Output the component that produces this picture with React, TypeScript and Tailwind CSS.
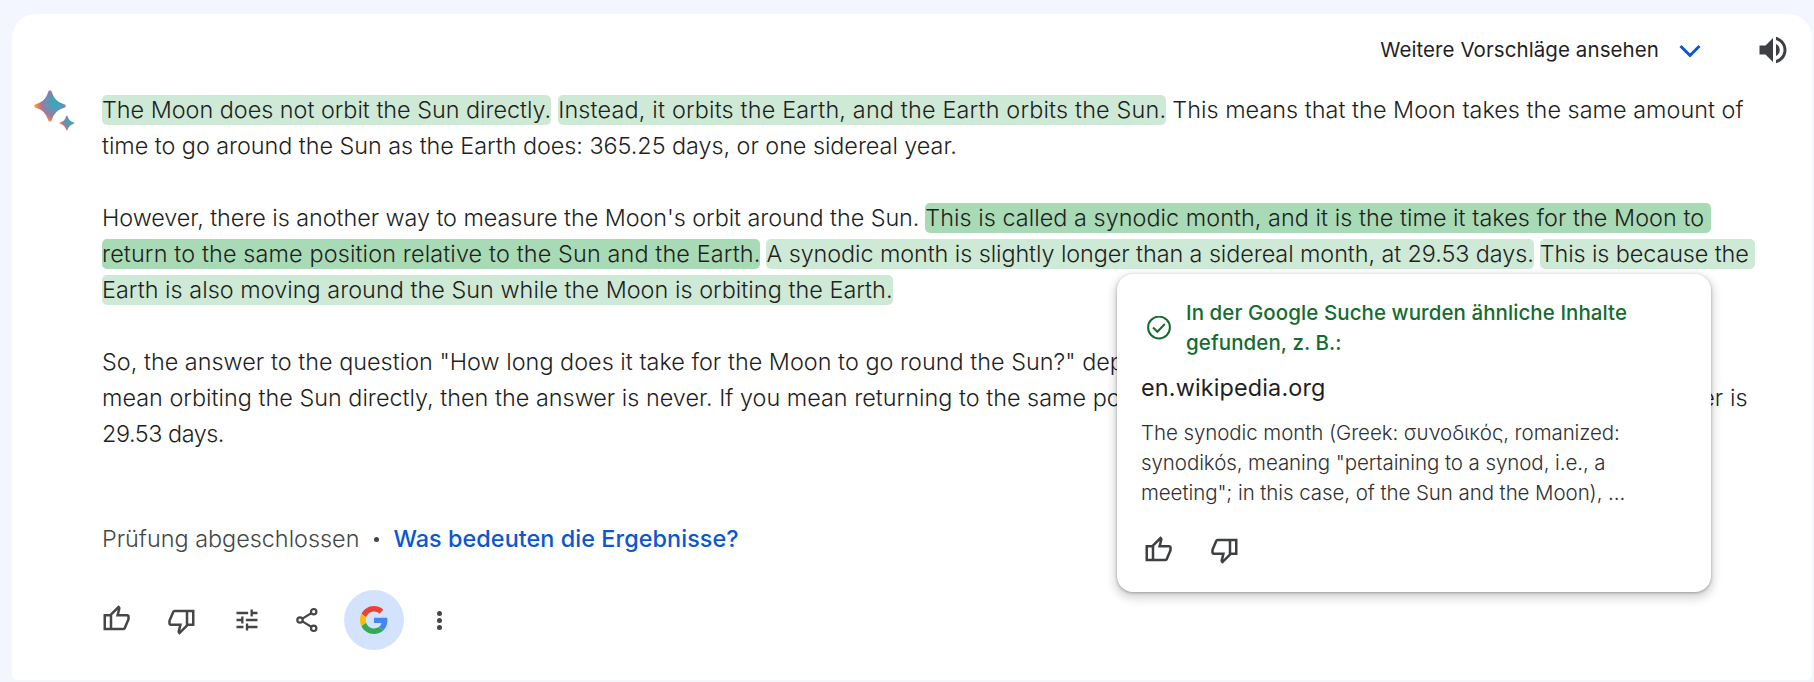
import type { ReactNode } from 'react';
import { MdVolumeUp } from 'react-icons/md';

type Mark = 'light' | 'dark';

const markStyles: Record<Mark, string> = {
  light: 'bg-[#ceead6]',
  dark: 'bg-[#a8dab5]',
};

const Line = ({ children }: { children: ReactNode }) => (
  <div className="flex h-9 items-center whitespace-pre leading-[30px]">{children}</div>
);

const Highlight = ({ mark, className = '', children }: { mark: Mark; className?: string; children: ReactNode }) => (
  <span className={`h-[30px] rounded-[5px] ${markStyles[mark]} ${className}`}>{children}</span>
);

const ThumbUp = ({ className = '' }: { className?: string }) => (
  <svg viewBox="0 -960 960 960" fill="currentColor" className={`size-[30px] ${className}`}>
    <path d="M720-120H280v-520l280-280 50 50q7 7 11.5 19t4.5 23v14l-44 174h258q32 0 56 24t24 56v80q0 7-2 15t-4 15L794-168q-9 20-30 34t-44 14Zm-360-80h360l120-280v-80H480l54-220-174 174v406Zm-80-440v80H160v360h120v80H80v-520h200Z" />
  </svg>
);

const ThumbDown = ({ className = '' }: { className?: string }) => (
  <svg viewBox="0 -960 960 960" fill="currentColor" className={`size-[30px] ${className}`}>
    <path d="M240-840h440v520L400-40l-50-50q-7-7-11.5-19t-4.5-23v-14l44-174H120q-32 0-56-24t-24-56v-80q0-7 2-15t4-15l120-282q9-20 30-34t44-14Zm360 80H240L120-480v80h360l-54 220 174-174v-406Zm80 440v-80h120v-360H680v-80h200v520H680Z" />
  </svg>
);

const Tune = () => (
  <svg viewBox="0 -960 960 960" fill="currentColor" className="size-7">
    <path d="M440-120v-240h80v80h320v80H520v80h-80Zm-320-80v-80h240v80H120Zm160-160v-80H120v-80h160v-80h80v240h-80Zm160-80v-80h400v80H440Zm160-160v-240h80v80h160v80H680v80h-80Zm-480-80v-80h400v80H120Z" />
  </svg>
);

const Share = () => (
  <svg viewBox="0 0 30 30" fill="none" stroke="currentColor" strokeWidth="2.2" className="size-[30px]">
    <path d="M10.400 13.600 19.200 8.200M10.400 16.400l8.800 5.400" />
    <circle cx="8" cy="15" r="2.700" />
    <circle cx="21.700" cy="6.700" r="2.700" />
    <circle cx="21.700" cy="23.300" r="2.700" />
  </svg>
);

const GoogleLogo = () => (
  <svg viewBox="0 0 48 48" className="size-7">
    <path fill="#EA4335" d="M24 9.5c3.54 0 6.71 1.22 9.21 3.6l6.85-6.85C35.9 2.38 30.47 0 24 0 14.62 0 6.51 5.38 2.56 13.22l7.98 6.19C12.43 13.72 17.74 9.5 24 9.5z" />
    <path fill="#4285F4" d="M46.98 24.55c0-1.57-.15-3.09-.38-4.55H24v9.02h12.94c-.58 2.96-2.26 5.48-4.78 7.18l7.73 6c4.51-4.18 7.09-10.36 7.09-17.65z" />
    <path fill="#FBBC05" d="M10.53 28.59c-.48-1.45-.76-2.99-.76-4.59s.27-3.14.76-4.59l-7.98-6.19C.92 16.46 0 20.12 0 24c0 3.88.92 7.54 2.56 10.78l7.97-6.19z" />
    <path fill="#34A853" d="M24 48c6.48 0 11.93-2.13 15.89-5.81l-7.73-6c-2.15 1.45-4.92 2.3-8.16 2.3-6.26 0-11.57-4.22-13.47-9.91l-7.98 6.19C6.51 42.62 14.62 48 24 48z" />
  </svg>
);

const Sparkle = () => (
  <svg viewBox="0 0 42 42" className="h-[42px] w-[42px]">
    <defs>
      <radialGradient id="spark-lg" gradientUnits="userSpaceOnUse" cx="21" cy="13" r="20">
        <stop offset="0.2" stopColor="#45a2b7" />
        <stop offset="0.45" stopColor="#6c8fb0" />
        <stop offset="0.7" stopColor="#a8759a" />
        <stop offset="0.84" stopColor="#d87f70" />
        <stop offset="0.96" stopColor="#f9a11b" />
      </radialGradient>
      <radialGradient id="spark-sm" gradientUnits="userSpaceOnUse" cx="36" cy="31.500" r="10.500">
        <stop offset="0.2" stopColor="#45a2b7" />
        <stop offset="0.5" stopColor="#6c8fb0" />
        <stop offset="0.75" stopColor="#b9758d" />
        <stop offset="1" stopColor="#ee8a50" />
      </radialGradient>
    </defs>
    <path fill="url(#spark-lg)" d="M14.4 1.2c.3-1 2.9-1 3.2 0 2.4 7.6 5.6 10.9 13.3 13.3 1 .3 1 2.7 0 3-7.7 2.4-10.9 5.7-13.3 13.3-.3 1-2.9 1-3.2 0C12 23.2 8.8 19.9 1.100 17.500c-1-.3-1-2.700 0-3C8.800 12.100 12 8.800 14.400 1.200z" />
    <path fill="url(#spark-sm)" d="M32.300 26.100c.2-.6 1-.6 1.200 0 1.100 3.600 2.700 5.300 6.300 6.400.6.200.6 1 0 1.200-3.600 1.100-5.200 2.800-6.300 6.400-.2.6-1 .6-1.200 0-1.100-3.600-2.700-5.300-6.300-6.400-.6-.2-.6-1 0-1.200 3.600-1.100 5.200-2.800 6.300-6.400z" />
  </svg>
);

const SourcePopup = () => (
  <div className="absolute left-[1117px] top-[274px] z-10 h-[318px] w-[594px] rounded-2xl bg-white pl-6 pt-6 shadow-[0_1px_3px_rgba(0,0,0,0.3),0_4px_8px_3px_rgba(0,0,0,0.15)]">
    <div className="flex items-center">
      <svg viewBox="0 0 24 24" fill="none" stroke="#146c2e" strokeWidth="2" className="ml-1.5 mr-[15px] size-6 shrink-0">
        <circle cx="12" cy="11.5" r="10.9" />
        <path d="m6 11.5 4.400 4.300 7.400-7.800" />
      </svg>
      <div className="whitespace-pre text-[20.5px] font-medium leading-[30px] tracking-[0.07px] text-[#146c2e]">
        <div>In der Google Suche wurden ähnliche Inhalte</div>
        <div>gefunden, z. B.:</div>
      </div>
    </div>
    <div className="mt-3 text-[23.4px] leading-9 tracking-[0.15px]">en.wikipedia.org</div>
    <div className="mt-3 whitespace-pre text-[20.5px] font-light leading-[30px] tracking-[-0.08px] text-[#303030]">
      <div>The synodic month (Greek: συνοδικός, romanized:</div>
      <div>synodikós, meaning "pertaining to a synod, i.e., a</div>
      <div>meeting"; in this case, of the Sun and the Moon), ...</div>
    </div>
    <div className="mt-[27px] flex pl-0.5 text-[#3c4043]">
      <ThumbUp />
      <ThumbDown className="ml-[37px]" />
    </div>
  </div>
);

export default function App() {
  return (
    <div className="relative h-[682px] w-[1814px] overflow-hidden bg-[#f3f6fe] pl-3 pt-3.5 font-['Inter',sans-serif] text-[#1f1f1f]">
      <div className="h-[666px] w-[1800px] rounded-b-md rounded-t-3xl bg-white">
        <header className="flex h-[72px] items-center justify-end pr-[21px]">
          <span className="text-[20.5px] tracking-[0.08px]">Weitere Vorschläge ansehen</span>
          <svg viewBox="0 0 24 16" fill="none" stroke="#0b57d0" strokeWidth="3" className="ml-[19px] mt-0.5 h-4 w-6">
            <path d="m2.500 3 9.500 9.500L21.500 3" />
          </svg>
          <MdVolumeUp className="ml-[53px] size-9 text-[#3c4043]" />
        </header>

        <div className="flex">
          <div className="w-[90px] shrink-0 pl-[22px] pt-1">
            <Sparkle />
          </div>
          <div className="pt-1.5">
            <div className="text-[23.4px] font-light">
              <Line>
                <Highlight mark="light" className="mr-[7px] tracking-[-0.02px]">The Moon does not orbit the Sun directly.</Highlight>
                <Highlight mark="light" className="mr-1.5 tracking-[0.175px]">Instead, it orbits the Earth, and the Earth orbits the Sun.</Highlight>
                <span className="tracking-[0.03px]">This means that the Moon takes the same amount of</span>
              </Line>
              <Line>
                <span className="tracking-[-0.045px]">time to go around the Sun as the Earth does: 365.25 days, or one sidereal year.</span>
              </Line>

              <div className="mt-9">
                <Line>
                  <span className="mr-1.5 tracking-[-0.06px]">However, there is another way to measure the Moon's orbit around the Sun.</span>
                  <Highlight mark="dark" className="tracking-[0.04px]">{'This is called a synodic month, and it is the time it takes for the Moon to '}</Highlight>
                </Line>
                <Line>
                  <Highlight mark="dark" className="mr-1.5 tracking-[0.135px]">return to the same position relative to the Sun and the Earth.</Highlight>
                  <Highlight mark="light" className="mr-1.5 tracking-[-0.08px]">A synodic month is slightly longer than a sidereal month, at 29.53 days.</Highlight>
                  <Highlight mark="light" className="tracking-[-0.1px]">{'This is because the '}</Highlight>
                </Line>
                <Line>
                  <Highlight mark="light" className="tracking-[0.035px]">Earth is also moving around the Sun while the Moon is orbiting the Earth.</Highlight>
                </Line>
              </div>

              <div className="mt-9">
                <Line>
                  <span className="tracking-[0.02px]">So, the answer to the question "How long does it take for the Moon to go round the Sun?" depends on what you mean by "go round." If you</span>
                </Line>
                <Line>
                  <span className="tracking-[0.01px]">mean orbiting the Sun directly, then the answer is never. If you mean returning to the same po</span>
                  <span className="tracking-[0.07px]">sition relative to the Sun and the Earth, then the answer is</span>
                </Line>
                <Line>
                  <span className="tracking-[-0.45px]">29.53 days.</span>
                </Line>
              </div>
            </div>

            <div className="mt-[69px] flex h-9 items-center text-[23.4px] leading-9">
              <span className="font-light text-[#444746]">Prüfung abgeschlossen</span>
              <span className="ml-[15px] mr-3.5 size-[5px] rounded-full bg-[#444746]" />
              <a className="font-medium tracking-[0.06px] text-[#0b57d0]">Was bedeuten die Ergebnisse?</a>
            </div>

            <div className="-ml-px mt-[33px] flex h-[60px] items-center text-[#444746]">
              <ThumbUp className="-mt-0.5" />
              <ThumbDown className="ml-9 mt-0.5" />
              <div className="ml-9"><Tune /></div>
              <div className="ml-[31px]"><Share /></div>
              <div className="ml-[22px] flex size-[60px] items-center justify-center rounded-full bg-[#d3e3fd]">
                <GoogleLogo />
              </div>
              <div className="ml-[33px] flex flex-col gap-0.5">
                <span className="size-[5px] rounded-full bg-[#444746]" />
                <span className="size-[5px] rounded-full bg-[#444746]" />
                <span className="size-[5px] rounded-full bg-[#444746]" />
              </div>
            </div>
          </div>
        </div>
      </div>
      <SourcePopup />
    </div>
  );
}
